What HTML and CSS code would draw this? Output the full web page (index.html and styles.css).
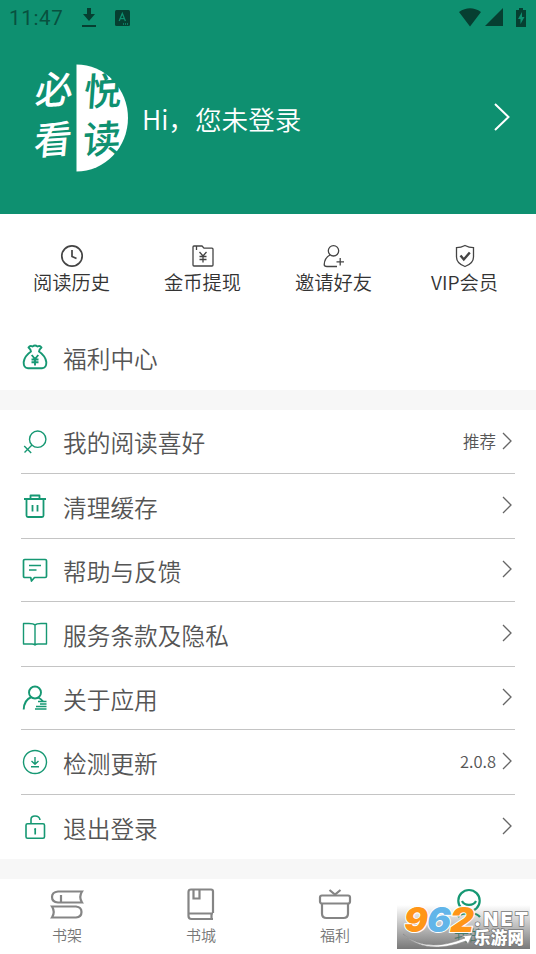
FILE: index.html
```html
<!DOCTYPE html>
<html lang="zh-CN">
<head>
<meta charset="utf-8">
<title>我的</title>
<link rel="stylesheet" href="styles.css">
</head>
<body>
<header class="header">
  <div class="status">
    <span class="time">11:47</span>
    <svg class="st-download" width="16" height="20" viewBox="0 0 16 20"><path d="M6 0h4v6h4l-6 7-6-7h4zM1 17h14v2H1z"/></svg>
    <svg class="st-app" width="15" height="16" viewBox="0 0 15 16"><rect width="15" height="16" rx="1.5"/><path class="letter" d="M4.2 11 7.3 3.5 10.4 11M5.3 8.700h4"/><path class="letter" d="M8 14h5" stroke-dasharray="1 1"/></svg>
    <svg class="st-signal" width="68" height="20" viewBox="0 0 68 20"><path d="M0 4Q11-3.500 22 4L11 18.500zM44 0v18H26zM57 2h3V0h4v2h3v17H57z"/><path class="bolt" d="M63 4l-4 7h2.500v5l4-7H63z"/></svg>
  </div>
  <div class="profile">
    <svg class="logo" width="96" height="110" viewBox="0 0 96 110">
      <path d="M43.500 1.500A51.500 53.500 0 0 1 43.500 108.500z" fill="#fff"/>
      <g class="brush" fill="#fff"><text transform="translate(1 42) rotate(-4) skewX(-9)">必</text><text transform="translate(0 92) rotate(-4) skewX(-9)">看</text></g>
      <g class="brush" fill="#0e9070"><text transform="translate(50 43) rotate(-3) skewX(-7)">悦</text><text transform="translate(49 91) rotate(-3) skewX(-7)">读</text></g>
    </svg>
    <span class="hello">Hi，您未登录</span>
    <svg class="go" width="18" height="28" viewBox="0 0 18 28"><path d="M2 1l13.500 13L2 27"/></svg>
  </div>
</header>

<nav class="shortcuts">
  <a class="shortcut"><svg width="24" height="24" viewBox="0 0 24 24"><circle cx="12" cy="12" r="10.200" stroke-width="1.700"/><path d="M12 6v6.500l4.500 2" stroke-width="1.700"/></svg><span>阅读历史</span></a>
  <a class="shortcut"><svg width="24" height="24" viewBox="0 0 24 24"><path d="M3 2h8l2 2.200h8q1 0 1 1V21q0 1-1 1H3q-1 0-1-1V3q0-1 1-1zM5.500 2v4M8.500 8l3.500 4 3.500-4M12 12v6.500M8.500 12.500h7M8.500 15.500h7"/></svg><span>金币提现</span></a>
  <a class="shortcut"><svg width="24" height="24" viewBox="0 0 24 24"><circle cx="11.500" cy="6.800" r="5.200"/><path d="M8 11Q2.500 14 2.200 20.500 2.200 22.500 5 22.500h10M14.500 17.800h7.500M18.200 14v7.500"/></svg><span>邀请好友</span></a>
  <a class="shortcut"><svg width="24" height="24" viewBox="0 0 24 24"><path d="M12 1.500Q16 3.700 20.500 3.700V13q0 6.500-8.500 9.500Q3.500 19.500 3.500 13V3.700Q8 3.700 12 1.500z"/><path d="M7.500 11.500l3.300 4 6-7" stroke-width="2.400"/></svg><span>VIP会员</span></a>
</nav>

<section class="welfare row">
  <svg class="icon" width="26" height="26" viewBox="0 0 26 26" stroke-width="1.900"><path d="M9 7.500Q9 5.500 6.500 3.500 8 1.200 10.500 2.500q2.500-2 5 0 2.500-1.300 4 1-2.500 2-2.500 4Q23.500 12 24.300 18q.3 6-4.300 6.200H6q-4.600-.2-4.300-6.200Q2.500 12 9 7.500z"/><path d="M9.700 11l3.300 4 3.300-4M13 15v6.500M9.500 15.500h7M9.500 18.300h7"/></svg>
  <span class="name">福利中心</span>
</section>

<main class="list">
  <div class="row"><svg class="icon" width="26" height="26" viewBox="0 0 26 26"><circle cx="15.700" cy="10.200" r="8.200"/><path d="M10 16 2.500 23.500M2.200 17l7 7"/></svg><span class="name">我的阅读喜好</span><span class="value">推荐</span><svg class="arrow" width="12" height="18" viewBox="0 0 12 18"><path d="M2 1l8 8-8 8"/></svg></div>
  <div class="row"><svg class="icon" width="26" height="26" viewBox="0 0 26 26" stroke-width="1.800"><path d="M2 6h22M8.500 6V2.500h9V6M4.500 6v16.500q0 1.500 1.500 1.500h14q1.500 0 1.500-1.500V6M10.500 12v6.500M15.500 12v6.500"/></svg><span class="name">清理缓存</span><svg class="arrow" width="12" height="18" viewBox="0 0 12 18"><path d="M2 1l8 8-8 8"/></svg></div>
  <div class="row"><svg class="icon" width="26" height="26" viewBox="0 0 26 26" stroke-width="1.700"><path d="M2.800 2.500h20.400q1.300 0 1.300 1.300v15.400q0 1.300-1.300 1.300H12.500L9.500 24l-.8-3.500H2.800q-1.300 0-1.300-1.300V3.800q0-1.300 1.300-1.300zM7 8.500h12M7 13h7.500"/></svg><span class="name">帮助与反馈</span><svg class="arrow" width="12" height="18" viewBox="0 0 12 18"><path d="M2 1l8 8-8 8"/></svg></div>
  <div class="row"><svg class="icon" width="26" height="26" viewBox="0 0 26 26"><path d="M13 4Q11.500 2.500 7 2.500H1.500V23H10q2 0 3 1 1-1 3-1h8.500V2.500H19q-4.500 0-6 1.500zM13 4V24"/></svg><span class="name">服务条款及隐私</span><svg class="arrow" width="12" height="18" viewBox="0 0 12 18"><path d="M2 1l8 8-8 8"/></svg></div>
  <div class="row"><svg class="icon" width="26" height="26" viewBox="0 0 26 26"><circle cx="13" cy="7.500" r="6" stroke-width="1.900"/><path d="M9.500 12Q2 15 1.700 24.500M16 12.500q3 1.300 5 4" stroke-width="1.900"/><path d="M16 16.500h8.500M18 19h6.500M14 21.500h10.500M13 24h11.500" stroke-width="1.300"/></svg><span class="name">关于应用</span><svg class="arrow" width="12" height="18" viewBox="0 0 12 18"><path d="M2 1l8 8-8 8"/></svg></div>
  <div class="row"><svg class="icon" width="26" height="26" viewBox="0 0 26 26" stroke-width="1.400"><circle cx="13" cy="13" r="11.500"/><path d="M13 8v7M9.500 12l3.500 3.300 3.500-3.300M9 17.700h8"/></svg><span class="name">检测更新</span><span class="value">2.0.8</span><svg class="arrow" width="12" height="18" viewBox="0 0 12 18"><path d="M2 1l8 8-8 8"/></svg></div>
  <div class="row"><svg class="icon" width="26" height="26" viewBox="0 0 26 26" stroke-width="1.600"><rect x="4" y="9.700" width="18.500" height="14.500" rx="1.500"/><path d="M9 9.500V5.500Q9 2 13 2q4.500 0 5 4"/><path d="M13.200 15v5.500" stroke-width="1.700"/><circle cx="13.200" cy="15" r="1" fill="#169873" stroke="none"/></svg><span class="name">退出登录</span><svg class="arrow" width="12" height="18" viewBox="0 0 12 18"><path d="M2 1l8 8-8 8"/></svg></div>
</main>

<footer class="tabs">
  <a class="tab"><svg width="34" height="34" viewBox="0 0 34 34"><path d="M32 3.500H8Q2 4 2 9t6 5.500h24Q28.500 9 32 3.500zM11 7v7.500M2 18.500h24q5.500.5 5.500 5.500T26 29.500H2q3.500-5.500 0-11z"/></svg><span>书架</span></a>
  <a class="tab"><svg width="34" height="34" viewBox="0 0 34 34"><path d="M29 25V3.500Q29 1.500 27 1.500H7Q4.500 1.500 4.500 4v24q0 3 3 3H29M5 25.500h24M27.500 25.500V31M9.500 2v8.500h6V2"/></svg><span>书城</span></a>
  <a class="tab"><svg width="34" height="34" viewBox="0 0 34 34"><rect x="2" y="7.500" width="30" height="8" rx="2"/><path d="M4 15.500v10q0 4.500 4.500 4.500h17q4.500 0 4.500-4.500v-10M11.500 2l5.500 4.500L22.500 2"/></svg><span>福利</span></a>
  <a class="tab active"><svg width="34" height="34" viewBox="0 0 34 34"><circle cx="17" cy="12.700" r="10.700"/><path d="M10 13a7.500 6 0 0 0 14 0M6 29q3-3.500 8-3.500h6q5 0 8 3.500"/></svg><span>我的</span></a>
  <svg class="watermark" width="133" height="44" viewBox="0 0 133 44">
    <defs><linearGradient id="shade" x2="0" y2="1"><stop stop-color="#666" stop-opacity="0"/><stop offset="1" stop-color="#666" stop-opacity=".88"/></linearGradient></defs>
    <rect width="133" height="44" fill="url(#shade)"/>
    <g class="digits"><text x="7" y="27" fill="#ff9618" textLength="24" lengthAdjust="spacingAndGlyphs">9</text><text x="30" y="27" fill="#62b5e9" textLength="24" lengthAdjust="spacingAndGlyphs">6</text><text x="53" y="27" fill="#ff9618" textLength="24" lengthAdjust="spacingAndGlyphs">2</text></g>
    <path d="M6 29Q29 49 68 33l-3-2 10-1-4 9-2-3Q29 51 6 29z" fill="#fff" stroke="#888" stroke-width=".6"/>
    <g class="marktext"><text x="77" y="21" font-size="19" textLength="54" lengthAdjust="spacing">.NET</text><text x="77" y="39" font-size="16.500" textLength="50">乐游网</text></g>
  </svg>
</footer>
</body>
</html>
```
FILE: styles.css
```css
* { box-sizing: border-box; }
body {
  margin: 0;
  width: 536px;
  height: 954px;
  overflow: hidden;
  background: #fff;
  color: #555;
  font-family: "Noto Sans CJK SC", sans-serif;
  font-weight: 350;
}
svg { flex: none; fill: none; }

.header { height: 214px; background: #0e9070; }
.status {
  display: flex;
  align-items: center;
  height: 36px;
  padding: 0 9px 0 9px;
}
.status svg { fill: #063f31; }
.time { width: 72px; color: #08513f; font: 400 20.500px Roboto, sans-serif; letter-spacing: .7px; }
.st-app { margin-left: 18px; }
.status .letter { fill: none; stroke: #0e9070; stroke-width: 1.300; }
.st-signal { margin-left: auto; }
.status .bolt { fill: #0e9070; }
.profile {
  display: flex;
  align-items: center;
  height: 164px;
  padding: 0 25px 0 33px;
}
.logo { overflow: visible; }
.brush { font: 500 38px "Noto Sans CJK SC", sans-serif; }
.hello { margin: 2px 0 0 13px; color: #fff; font-size: 26.600px; line-height: 40px; }
.go { margin: 0 0 2px auto; stroke: #fff; stroke-width: 2; }

.shortcuts {
  display: grid;
  grid-template-columns: repeat(4, 131px);
  height: 112px;
  padding: 30px 0 0 6px;
}
.shortcut {
  display: flex;
  flex-direction: column;
  align-items: center;
  color: #333;
  font-size: 19.300px;
  line-height: 29px;
}
.shortcut svg { stroke: #444; stroke-width: 1.300; }

.row {
  display: flex;
  align-items: center;
  padding: 0 2px 0 1px;
}
.icon { stroke: #169873; stroke-linejoin: round; }
.list .icon:not([stroke-width]) { stroke-width: 1.400; }
.name { margin: 1px auto 0 15px; font-size: 23.700px; line-height: 34px; }
.value { margin: 0 5px 2px 0; font-size: 16.500px; line-height: 24px; }
.arrow { margin-bottom: 2px; stroke: #666; stroke-width: 1.300; }
.welfare { height: 64px; padding: 0 0 2px 22px; }

.list {
  display: grid;
  grid-template-rows: 64px 65px 63px 65px 63px 65px 64px;
  padding: 0 21px;
  border-top: 20px solid #f7f7f7;
  border-bottom: 20px solid #f7f7f7;
}
.list .row { border-bottom: 1px solid #c4c4c4; }
.list .row:last-child { border-bottom: 0; }

.tabs {
  position: relative;
  display: grid;
  grid-template-columns: repeat(4, 134px);
  height: 75px;
  padding-top: 9px;
}
.tab {
  display: flex;
  flex-direction: column;
  align-items: center;
  color: #777;
  font-size: 15px;
  line-height: 24px;
}
.tab svg { margin-bottom: 1px; stroke: #858585; stroke-width: 2.200; }
.tab.active { color: #169873; }
.tab.active svg { stroke: #169873; }
.watermark { position: absolute; left: 397px; top: 26px; }
.digits { font: italic 900 34px Inter, sans-serif; stroke: #fff; stroke-width: 2; paint-order: stroke; }
.marktext { font-family: Inter, "Noto Sans CJK SC", sans-serif; font-weight: 900; fill: #fff; stroke: #777; stroke-width: 1.500; paint-order: stroke; }
.tab svg + span { position: relative; }
```
